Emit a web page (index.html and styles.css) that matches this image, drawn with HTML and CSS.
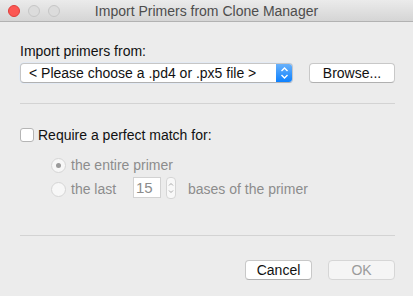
FILE: index.html
```html
<!DOCTYPE html>
<html lang="en">
<head>
    <meta charset="UTF-8">
    <title>Import Primers from Clone Manager</title>
    <link rel="stylesheet" href="styles.css">
</head>
<body>
    <div class="window">
        <div class="titlebar">
            <div class="lights">
                <span class="light light-close"></span>
                <span class="light"></span>
                <span class="light"></span>
            </div>
            <div class="title">Import Primers from Clone Manager</div>
            <div></div>
        </div>

        <div class="content">
            <div class="label">Import primers from:</div>
            <div class="file-row">
                <div class="popup">
                    <span class="popup-text">&lt; Please choose a .pd4 or .px5 file &gt;</span>
                    <span class="popup-arrows">
                        <svg width="9" height="14" viewBox="0 0 9 14">
                            <path d="M1.5 5 L4.5 2 L7.5 5 M1.5 9 L4.5 12 L7.5 9" fill="none" stroke="#fff" stroke-width="1.4"/>
                        </svg>
                    </span>
                </div>
                <button class="btn">Browse...</button>
            </div>

            <div class="separator sep-top"></div>

            <label class="check-row">
                <span class="checkbox"></span>
                <span>Require a perfect match for:</span>
            </label>

            <div class="radios">
                <div class="radio-row">
                    <span class="radio radio-on"></span>
                    <span>the entire primer</span>
                </div>
                <div class="radio-row">
                    <span class="radio"></span>
                    <span class="last-label">the last</span>
                    <span class="number-field">15</span>
                    <span class="stepper">
                        <svg width="8" height="18" viewBox="0 0 8 18">
                            <path d="M2 6.5 L4 4.5 L6 6.5 M2 11.5 L4 13.5 L6 11.5" fill="none" stroke="#a9a9a9" stroke-width="1"/>
                        </svg>
                    </span>
                    <span class="bases-label">bases of the primer</span>
                </div>
            </div>

            <div class="separator sep-bottom"></div>

            <div class="buttons">
                <button class="btn btn-small">Cancel</button>
                <button class="btn btn-small btn-disabled">OK</button>
            </div>
        </div>
    </div>
</body>
</html>
```

FILE: styles.css
```css
* {
    margin: 0;
    padding: 0;
    box-sizing: border-box;
}

body {
    font-family: "Liberation Sans", Arial, sans-serif;
    font-size: 14px;
    color: #111;
    background: #ececec;
}

.window {
    width: 413px;
    height: 296px;
    background: #ececec;
    overflow: hidden;
}

.titlebar {
    height: 22px;
    display: grid;
    grid-template-columns: 80px 1fr 80px;
    align-items: center;
    background: linear-gradient(#ebebeb, #d5d5d5);
    border-bottom: 1px solid #b2b2b2;
}

.lights {
    display: flex;
    gap: 8px;
    padding-left: 8px;
    padding-top: 1px;
}

.light {
    width: 12px;
    height: 12px;
    border-radius: 50%;
    background: #dcdcdc;
    border: 1px solid #c6c6c6;
}

.light-close {
    background: #fc5753;
    border-color: #df3e3a;
}

.title {
    text-align: center;
    color: #4d4d4d;
    font-size: 14px;
    padding-top: 1px;
}

.content {
    padding: 21px 18px 17px 20px;
}

.label {
    line-height: 16px;
    margin-bottom: 4px;
}

.file-row {
    display: flex;
    gap: 16px;
}

.popup {
    width: 273px;
    height: 20px;
    display: flex;
    background: #fff;
    border: 1px solid #c6c6c6;
    border-bottom-color: #b1b1b1;
    border-radius: 4px;
    box-shadow: 0 0 0 0.5px #d9e7fb;
    overflow: hidden;
}

.popup-text {
    flex: 1;
    padding-left: 8px;
    line-height: 18px;
}

.popup-arrows {
    width: 16px;
    display: flex;
    align-items: center;
    justify-content: center;
    background: linear-gradient(#69b1fa, #0d81ff);
}

.btn {
    font-family: inherit;
    font-size: 14px;
    color: #111;
    width: 86px;
    height: 20px;
    background: #fff;
    border: 1px solid #c8c8c8;
    border-bottom-color: #b0b0b0;
    border-radius: 4px;
    line-height: 18px;
}

.btn-small {
    width: 67px;
}

.btn-disabled {
    background: #f5f5f5;
    color: #9b9b9b;
    border-color: #d6d6d6;
}

.separator {
    height: 1px;
    background: #d3d3d3;
}

.sep-top {
    margin-top: 20px;
}

.check-row {
    display: flex;
    align-items: center;
    gap: 4px;
    margin-top: 24px;
    height: 14px;
}

.checkbox {
    width: 14px;
    height: 14px;
    background: #fff;
    border: 1px solid #b5b5b5;
    border-radius: 3px;
}

.radios {
    padding-left: 31px;
    margin-top: 15px;
    color: #8c8c8c;
}

.radio-row {
    display: flex;
    align-items: center;
    gap: 5px;
    height: 16px;
}

.radio-row + .radio-row {
    margin-top: 5px;
    height: 22px;
}

.radio {
    width: 15px;
    height: 15px;
    border-radius: 50%;
    background: #f7f7f7;
    border: 1px solid #d5d5d5;
    display: flex;
    align-items: center;
    justify-content: center;
}

.radio-on::after {
    content: "";
    width: 5px;
    height: 5px;
    border-radius: 50%;
    background: #9a9a9a;
}

.last-label {
    width: 57px;
}

.number-field {
    width: 28px;
    height: 21px;
    background: #fff;
    border: 1px solid #d2d2d2;
    padding-left: 2px;
    line-height: 19px;
    font-size: 15px;
    margin-bottom: 3px;
}

.stepper {
    width: 10px;
    height: 22px;
    border: 1px solid #d5d5d5;
    border-radius: 4px;
    background: #f8f8f8;
    display: flex;
    align-items: center;
    justify-content: center;
    margin-bottom: 2px;
}

.bases-label {
    margin-left: 7px;
}

.sep-bottom {
    margin-top: 35px;
}

.buttons {
    display: flex;
    justify-content: flex-end;
    gap: 16px;
    margin-top: 24px;
}
```
